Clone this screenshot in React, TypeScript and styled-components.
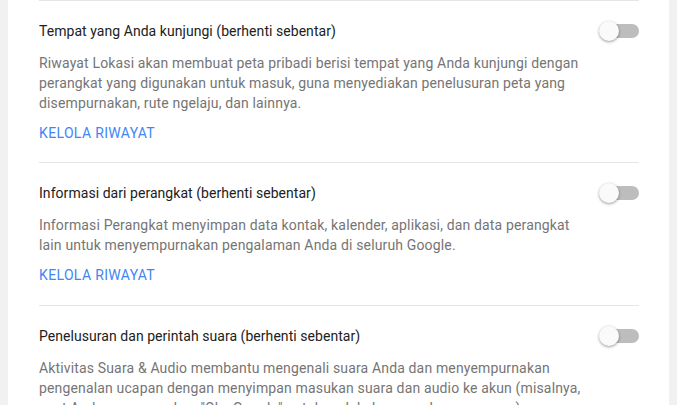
import * as React from 'react';
import styled, { createGlobalStyle } from 'styled-components';

const GlobalStyle = createGlobalStyle`
  html, body {
    margin: 0;
    padding: 0;
    background: #f1f1f1;
    font-family: Roboto, "Noto Sans", Arial, sans-serif;
  }
`;

const Page = styled.div`
  padding: 0 8px;
`;

const Card = styled.div`
  background: #fff;
  padding: 0 30px 0 31px;
  min-height: 100vh;
`;

const List = styled.div`
  width: 600px;
  border-top: 1px solid #e5e5e5;
`;

const Item = styled.div`
  display: flex;
  align-items: flex-start;
  padding: 20px 0;
  border-bottom: 1px solid #e5e5e5;

  &:first-child {
    padding-bottom: 19px;
  }
  &:last-child {
    border-bottom: none;
  }
`;

const Body = styled.div`
  width: 552px;
  display: flex;
  flex-direction: column;
`;

const Title = styled.div`
  font-size: 14px;
  line-height: 20px;
  color: #212121;
  letter-spacing: 0.05px;
  margin-bottom: 12px;
`;

const Desc = styled.p`
  margin: 0 0 10px;
  font-size: 14px;
  line-height: 20px;
  letter-spacing: 0.15px;
  color: #757575;
`;

const Link = styled.a`
  font-size: 14px;
  line-height: 20px;
  letter-spacing: 0.35px;
  color: #4285f4;
  text-transform: uppercase;
  text-decoration: none;
  cursor: pointer;
`;

const Switch = styled.button`
  position: relative;
  margin-left: auto;
  margin-top: 3px;
  width: 38px;
  height: 14px;
  padding: 0;
  border: none;
  border-radius: 7px;
  background: #bdbdbd;
  flex-shrink: 0;

  &::after {
    content: '';
    position: absolute;
    left: -2px;
    top: -3px;
    width: 20px;
    height: 20px;
    border-radius: 50%;
    background: #fafafa;
    box-shadow: 0 1px 3px rgba(0, 0, 0, 0.4);
  }
`;

const items = [
  {
    title: 'Tempat yang Anda kunjungi (berhenti sebentar)',
    desc: 'Riwayat Lokasi akan membuat peta pribadi berisi tempat yang Anda kunjungi dengan perangkat yang digunakan untuk masuk, guna menyediakan penelusuran peta yang disempurnakan, rute ngelaju, dan lainnya.',
    link: 'Kelola riwayat',
  },
  {
    title: 'Informasi dari perangkat (berhenti sebentar)',
    desc: 'Informasi Perangkat menyimpan data kontak, kalender, aplikasi, dan data perangkat lain untuk menyempurnakan pengalaman Anda di seluruh Google.',
    link: 'Kelola riwayat',
  },
  {
    title: 'Penelusuran dan perintah suara (berhenti sebentar)',
    desc: 'Aktivitas Suara & Audio membantu mengenali suara Anda dan menyempurnakan pengenalan ucapan dengan menyimpan masukan suara dan audio ke akun (misalnya, saat Anda mengucapkan "Oke Google" untuk melakukan penelusuran suara).',
    link: 'Kelola riwayat',
  },
];

export default function App() {
  return (
    <>
      <GlobalStyle />
      <Page>
        <Card>
          <List>
            {items.map((it, i) => (
              <Item key={i}>
                <Body>
                  <Title>{it.title}</Title>
                  <Desc>{it.desc}</Desc>
                  <Link>{it.link}</Link>
                </Body>
                <Switch aria-label="toggle" />
              </Item>
            ))}
          </List>
        </Card>
      </Page>
    </>
  );
}
